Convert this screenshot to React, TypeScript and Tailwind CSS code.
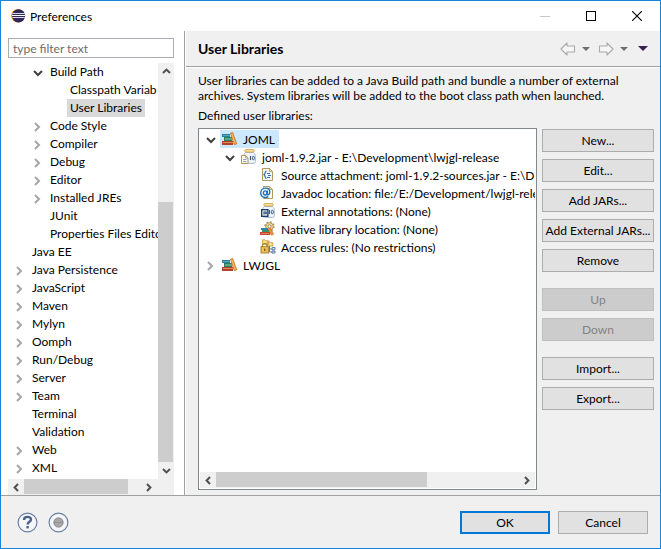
import React from "react";

type Dir = "left" | "right" | "up" | "down";

const arrowPaths: Record<Dir, string> = {
  right: "M3 1 L6.4 4.5 L3 8",
  left: "M6 1 L2.6 4.5 L6 8",
  down: "M1 3 L4.5 6.4 L8 3",
  up: "M1 6 L4.5 2.6 L8 6",
};

function Chevron({ dir }: { dir: Dir }) {
  return (
    <svg width="9" height="9" viewBox="0 0 9 9" fill="none" stroke="#505050" strokeWidth="2" aria-hidden="true">
      <path d={arrowPaths[dir]} />
    </svg>
  );
}

function Expander({ state, name }: { state?: "open" | "closed"; name: string }) {
  if (!state) return <span className="w-[19px] shrink-0" />;
  return (
    <button type="button" aria-label={`Toggle ${name}`} className="flex h-[18px] w-[19px] shrink-0 items-center justify-center pt-0.5">
      {state === "open" ? (
        <svg width="10" height="7" viewBox="0 0 10 7" fill="none" stroke="#404040" strokeWidth="2" aria-hidden="true">
          <path d="M1 1 L5 5 L9 1" />
        </svg>
      ) : (
        <svg width="7" height="10" viewBox="0 0 7 10" fill="none" stroke="#a6a6a6" strokeWidth="2" aria-hidden="true">
          <path d="M1 1 L5 5 L1 9" />
        </svg>
      )}
    </button>
  );
}

/* ---------- icons ---------- */

function EclipseIcon() {
  return (
    <svg width="16" height="16" viewBox="0 0 16 16" aria-hidden="true">
      <circle cx="7.8" cy="7.8" r="6.7" fill="#f7941e" />
      <circle cx="8.6" cy="7.8" r="6.6" fill="#2f2659" />
      <rect x="2.4" y="5" width="12.4" height="1" fill="#dcd9ea" />
      <rect x="2" y="7" width="13.2" height="1" fill="#fff" />
      <rect x="2.4" y="9" width="12.4" height="1" fill="#dcd9ea" />
    </svg>
  );
}

function BooksIcon() {
  return (
    <svg width="16" height="16" viewBox="0 0 16 16" aria-hidden="true">
      <rect x="0" y="3" width="8" height="3" fill="#2b7fa3" />
      <rect x="1" y="4" width="7" height="1" fill="#4fa9bd" />
      <rect x="2" y="6" width="8" height="4" fill="#2f7d5b" />
      <rect x="3" y="7" width="7" height="2" fill="#58aa84" />
      <rect x="0" y="10" width="11" height="4" fill="#b5432a" />
      <rect x="1" y="11" width="10" height="1" fill="#d98a5c" />
      <path d="M8.4 2.2 L10.6 1.4 L14.8 12.8 L12.4 13.8 Z" fill="#ee9a32" stroke="#c06f1b" strokeWidth="0.7" />
      <path d="M9.8 3 L13.2 12.4" stroke="#fbc878" strokeWidth="0.8" />
    </svg>
  );
}

function JarBody() {
  return (
    <>
      <path d="M4.5 3.5 C3 4.8 2.6 5.8 2.6 7.6 V12.6 C2.6 13.8 3.4 14.4 4.8 14.4 H12.2 C13.6 14.4 14.4 13.8 14.4 12.6 V7.6 C14.4 5.8 14 4.8 12.5 3.5 Z" fill="#edf3fa" stroke="#a7bbd1" />
      <rect x="3.8" y="0.6" width="9.4" height="2.4" rx="1.1" fill="#fbe9ae" stroke="#d0a440" strokeWidth="0.9" />
      <path d="M9.5 7 V11" stroke="#33557f" strokeWidth="1.1" />
      <rect x="11.4" y="7.4" width="1.9" height="3.3" rx="0.8" fill="none" stroke="#33557f" strokeWidth="0.9" />
    </>
  );
}

function JarIcon() {
  return (
    <svg width="16" height="16" viewBox="0 0 16 16" aria-hidden="true">
      <JarBody />
      <path d="M0.5 6.5 H4.5 L7 9 V14.5 H0.5 Z" fill="#fffdf2" stroke="#b8944c" />
      <path d="M4.5 6.5 V9 H7" fill="none" stroke="#b8944c" strokeWidth="0.8" />
      <path d="M2 10.5 H5.5 M2 12.5 H5.5" stroke="#7d9cc4" strokeWidth="0.9" />
    </svg>
  );
}

function SourceIcon() {
  return (
    <svg width="16" height="16" viewBox="0 0 16 16" aria-hidden="true">
      <path d="M2.5 1.5 H9.5 L12.5 4.5 V13.5 H2.5 Z" fill="#eef4fb" stroke="#b09a5e" />
      <path d="M9.5 1.5 V4.5 H12.5 Z" fill="#f2dda0" stroke="#b09a5e" strokeWidth="0.8" />
      <path d="M6.5 4.2 C4.6 4.2 5.6 7 4 7.7 C5.6 8.4 4.6 11.4 6.5 11.4" fill="none" stroke="#3a6ea5" strokeWidth="1.2" />
      <path d="M7 6.5 H10 M8 8.5 H11 M7 10.5 H10" stroke="#3a6ea5" />
    </svg>
  );
}

function JavadocIcon() {
  return (
    <svg width="16" height="16" viewBox="0 0 16 16" aria-hidden="true">
      <path d="M3.5 1.5 H9.5 L12.5 4.5 V13.5 H3.5 Z" fill="#fdfaf0" stroke="#b09a5e" />
      <path d="M9.5 1.5 V4.5 H12.5 Z" fill="#f2dda0" stroke="#b09a5e" strokeWidth="0.8" />
      <circle cx="5.2" cy="7.8" r="5.2" fill="#eef5fb" />
      <path d="M8.4 11.6 C5 13.6 0.7 12 0.7 8.1 C0.7 5.2 2.8 3.2 5.5 3.2 C8.1 3.2 9.8 4.8 9.8 7 C9.8 9 8.4 10 7.5 9.8 C6.7 9.6 7 8.7 7.6 5.6" fill="none" stroke="#1f6eb0" strokeWidth="1.3" />
      <ellipse cx="5.2" cy="7.9" rx="1.8" ry="2.1" fill="none" stroke="#1f6eb0" strokeWidth="1.3" />
    </svg>
  );
}

function AnnotationsIcon() {
  return (
    <svg width="16" height="16" viewBox="0 0 16 16" aria-hidden="true">
      <JarBody />
      <rect x="1.7" y="6.7" width="6.2" height="6.6" fill="#fff" stroke="#1f3f6c" strokeWidth="1.4" />
      <path d="M4 11.6 V9 H6.2 V10.8 H4.8" fill="none" stroke="#1f3f6c" strokeWidth="1.1" />
    </svg>
  );
}

function NativeIcon() {
  return (
    <svg width="16" height="16" viewBox="0 0 16 16" aria-hidden="true">
      <circle cx="9.5" cy="5.4" r="4.4" fill="none" stroke="#ab8c4c" strokeWidth="1.6" strokeDasharray="1.7 1.75" />
      <circle cx="9.5" cy="5.4" r="3.7" fill="#f3dfab" stroke="#b1934f" strokeWidth="0.9" />
      <circle cx="9.5" cy="5.4" r="1.6" fill="#fff" stroke="#94773d" strokeWidth="0.9" />
      <rect x="1" y="7" width="7" height="2" fill="#2d86a8" />
      <rect x="2" y="9" width="7" height="2" fill="#3d8f6b" />
      <rect x="0" y="11" width="10" height="3" fill="#c4472c" />
      <rect x="1" y="12" width="8" height="1" fill="#dd8460" />
      <path d="M8.2 7.8 L10.4 7 L13.6 13.2 L11.4 14.2 Z" fill="#f0912a" stroke="#c06f1b" strokeWidth="0.6" />
    </svg>
  );
}

function AccessIcon() {
  return (
    <svg width="16" height="16" viewBox="0 0 16 16" aria-hidden="true">
      <path d="M2.5 0.8 H5 L6 1.8 H8.5 V5.2 H2.5 Z M7.5 2.8 H10 L11 3.8 H12.8 V7 H7.5 Z" fill="#f8df8e" stroke="#c99f45" strokeWidth="0.9" />
      <path d="M9.5 7 V13 H12 M9.5 10 H12" fill="none" stroke="#5c7fae" />
      <path d="M12 8.6 H15 V10.8 H12 Z M12 12 H15 V14 H12 Z" fill="#dce8f6" stroke="#4c70a3" strokeWidth="0.9" />
      <path d="M2.4 8 V6.7 C2.4 4 7 4 7 6.7 V8" fill="none" stroke="#a67c2c" strokeWidth="1.3" />
      <rect x="1" y="7.7" width="7.4" height="6.3" fill="#edc25c" stroke="#a1782a" strokeWidth="0.9" />
      <rect x="4.2" y="9.6" width="1.2" height="2.4" fill="#6e4c10" />
    </svg>
  );
}

function HistoryArrow({ back }: { back?: boolean }) {
  return (
    <svg width="16" height="14" viewBox="0 0 16 14" aria-hidden="true">
      <path
        d={back ? "M1 7 L7 1 V4 H14.5 V10 H7 V13 Z" : "M15 7 L9 1 V4 H1.5 V10 H9 V13 Z"}
        fill="#f7f7f7"
        stroke="#a9a9a9"
        strokeWidth="1.1"
        strokeLinejoin="round"
      />
    </svg>
  );
}

function Caret({ color, big }: { color: string; big?: boolean }) {
  return big ? (
    <svg width="10" height="5" viewBox="0 0 10 5" aria-hidden="true">
      <path d="M0 0 H10 L5 5 Z" fill={color} />
    </svg>
  ) : (
    <svg width="8" height="4" viewBox="0 0 8 4" aria-hidden="true">
      <path d="M0 0 H8 L4 4 Z" fill={color} />
    </svg>
  );
}

/* ---------- scroll bars ---------- */

function HScroll({ thumb }: { thumb: string }) {
  return (
    <div className="flex h-4 min-w-0 flex-1 bg-[#f0f0f0]">
      <button type="button" aria-label="Scroll left" className="flex w-4 shrink-0 items-center justify-center">
        <Chevron dir="left" />
      </button>
      <div className="min-w-0 flex-1">
        <div className={`h-[15px] bg-[#cdcdcd] ${thumb}`} />
      </div>
      <button type="button" aria-label="Scroll right" className="flex w-[17px] shrink-0 items-center justify-center">
        <Chevron dir="right" />
      </button>
    </div>
  );
}

function VScroll() {
  return (
    <div className="flex w-4 shrink-0 flex-col bg-[#f0f0f0]">
      <button type="button" aria-label="Scroll up" className="flex h-[17px] items-center justify-center">
        <Chevron dir="up" />
      </button>
      <div className="flex flex-1 flex-col justify-end">
        <div className="h-[68%] w-[15px] bg-[#cdcdcd]" />
      </div>
      <button type="button" aria-label="Scroll down" className="flex h-[17px] items-center justify-center">
        <Chevron dir="down" />
      </button>
    </div>
  );
}

/* ---------- preference tree ---------- */

type Pref = { name: string; level: 0 | 1 | 2; state?: "open" | "closed"; selected?: boolean };

const prefs: Pref[] = [
  { name: "Build Path", level: 1, state: "open" },
  { name: "Classpath Variab", level: 2 },
  { name: "User Libraries", level: 2, selected: true },
  { name: "Code Style", level: 1, state: "closed" },
  { name: "Compiler", level: 1, state: "closed" },
  { name: "Debug", level: 1, state: "closed" },
  { name: "Editor", level: 1, state: "closed" },
  { name: "Installed JREs", level: 1, state: "closed" },
  { name: "JUnit", level: 1 },
  { name: "Properties Files Edito", level: 1 },
  { name: "Java EE", level: 0 },
  { name: "Java Persistence", level: 0, state: "closed" },
  { name: "JavaScript", level: 0, state: "closed" },
  { name: "Maven", level: 0, state: "closed" },
  { name: "Mylyn", level: 0, state: "closed" },
  { name: "Oomph", level: 0, state: "closed" },
  { name: "Run/Debug", level: 0, state: "closed" },
  { name: "Server", level: 0, state: "closed" },
  { name: "Team", level: 0, state: "closed" },
  { name: "Terminal", level: 0 },
  { name: "Validation", level: 0 },
  { name: "Web", level: 0, state: "closed" },
  { name: "XML", level: 0, state: "closed" },
];

const prefIndent = ["pl-0.5", "pl-5", "pl-10"];

/* ---------- library tree ---------- */

type Lib = { name: string; level: 0 | 1 | 2; icon: React.ReactNode; state?: "open" | "closed"; selected?: boolean };

const libs: Lib[] = [
  { name: "JOML", level: 0, icon: <BooksIcon />, state: "open", selected: true },
  { name: "joml-1.9.2.jar - E:\\Development\\lwjgl-release", level: 1, icon: <JarIcon />, state: "open" },
  { name: "Source attachment: joml-1.9.2-sources.jar - E:\\D", level: 2, icon: <SourceIcon /> },
  { name: "Javadoc location: file:/E:/Development/lwjgl-rele", level: 2, icon: <JavadocIcon /> },
  { name: "External annotations: (None)", level: 2, icon: <AnnotationsIcon /> },
  { name: "Native library location: (None)", level: 2, icon: <NativeIcon /> },
  { name: "Access rules: (No restrictions)", level: 2, icon: <AccessIcon /> },
  { name: "LWJGL", level: 0, icon: <BooksIcon />, state: "closed" },
];

const libIndent = ["pl-px", "pl-5", "pl-[39px]"];

function PushButton({ children, disabled }: { children: React.ReactNode; disabled?: boolean }) {
  return (
    <button
      type="button"
      disabled={disabled}
      className="h-[23px] w-full border border-[#adadad] bg-[#e1e1e1] whitespace-nowrap disabled:border-[#bfbfbf] disabled:bg-[#cccccc] disabled:text-[#838383]"
    >
      {children}
    </button>
  );
}

export default function App() {
  return (
    <div className="flex min-h-screen flex-col border border-[#1883d7] bg-[#f0f0f0] font-['Lato','Open_Sans',sans-serif] text-[12px] leading-[15px] text-black">
      <header className="flex h-[30px] shrink-0 items-center bg-white pl-[9px]">
        <EclipseIcon />
        <span className="ml-1 flex-1">Preferences</span>
        <button type="button" aria-label="Minimize" disabled className="flex h-full w-[46px] items-center justify-center">
          <svg width="10" height="10" viewBox="0 0 10 10" aria-hidden="true">
            <path d="M0 5.5 H10" stroke="#c8c8c8" />
          </svg>
        </button>
        <button type="button" aria-label="Maximize" className="flex h-full w-[46px] items-center justify-center">
          <svg width="10" height="10" viewBox="0 0 10 10" fill="none" aria-hidden="true">
            <rect x="0.5" y="0.5" width="9" height="9" stroke="#000" />
          </svg>
        </button>
        <button type="button" aria-label="Close" className="flex h-full w-[46px] items-center justify-center">
          <svg width="10" height="10" viewBox="0 0 10 10" aria-hidden="true">
            <path d="M0 0 L10 10 M10 0 L0 10" stroke="#000" strokeWidth="1.1" />
          </svg>
        </button>
      </header>

      <div className="flex flex-1">
        <nav aria-label="Preference pages" className="flex w-[184px] shrink-0 flex-col border-r border-[#a0a0a0] bg-white pt-[7px] pr-2.5 pl-[7px]">
          <input
            type="text"
            aria-label="Filter preferences"
            placeholder="type filter text"
            className="h-5 w-full shrink-0 border border-[#abadb3] bg-white px-1 placeholder:text-[#6d6d6d]"
          />
          <div className="mt-[5px] flex flex-1">
            <ul role="tree" className="min-w-0 flex-1 overflow-hidden">
              {prefs.map((p) => (
                <li
                  key={p.name}
                  role="treeitem"
                  aria-selected={!!p.selected}
                  className={`flex h-[18px] items-center whitespace-nowrap ${prefIndent[p.level]}`}
                >
                  <Expander state={p.state} name={p.name} />
                  <span className={`h-[18px] px-[3px] leading-[18px] ${p.selected ? "bg-[#d9d9d9]" : ""}`}>{p.name}</span>
                </li>
              ))}
            </ul>
            <VScroll />
          </div>
          <div className="flex shrink-0 bg-[#f0f0f0] pr-[17px]">
            <HScroll thumb="w-[90%]" />
          </div>
        </nav>

        <main className="flex min-w-0 flex-1 flex-col border-l border-white">
          <div className="flex h-9 shrink-0 items-center border-b border-[#a0a0a0] pr-2 pl-3">
            <h1 className="flex-1 text-[14px] font-bold">User Libraries</h1>
            <div className="flex items-center">
              <button type="button" aria-label="Back" disabled>
                <HistoryArrow back />
              </button>
              <button type="button" aria-label="Back history" disabled className="ml-1.5">
                <Caret color="#6e6e72" />
              </button>
              <button type="button" aria-label="Forward" disabled className="ml-2">
                <HistoryArrow />
              </button>
              <button type="button" aria-label="Forward history" disabled className="ml-1.5">
                <Caret color="#6e6e72" />
              </button>
              <button type="button" aria-label="View menu" className="mr-1 ml-2.5">
                <Caret color="#35204f" big />
              </button>
            </div>
          </div>

          <div className="flex flex-1 flex-col border-t border-white pt-[5px] pr-1.5 pb-[5px] pl-3">
            <p>
              User libraries can be added to a Java Build path and bundle a number of external
              <br />
              archives. System libraries will be added to the boot class path when launched.
            </p>
            <h2 className="mt-[5px]">Defined user libraries:</h2>
            <div className="mt-[5px] flex flex-1 gap-[5px]">
              <div className="flex min-w-0 flex-1 flex-col border border-[#828790] bg-white p-px">
                <ul role="tree" aria-label="Defined user libraries" className="flex-1 overflow-hidden">
                  {libs.map((l) => (
                    <li
                      key={l.name}
                      role="treeitem"
                      aria-selected={!!l.selected}
                      className={`flex h-[18px] items-center whitespace-nowrap ${libIndent[l.level]}`}
                    >
                      <Expander state={l.state} name={l.name} />
                      <span className={`flex h-[18px] items-center gap-[5px] pr-1 ${l.selected ? "bg-[#cce8ff]" : ""}`}>
                        <span className="ml-0.5 flex w-4 shrink-0">{l.icon}</span>
                        <span>{l.name}</span>
                      </span>
                    </li>
                  ))}
                </ul>
                <div className="flex">
                  <HScroll thumb="w-[70%]" />
                </div>
              </div>
              <div className="flex w-28 shrink-0 flex-col gap-[7px] pt-px">
                <PushButton>New...</PushButton>
                <PushButton>Edit...</PushButton>
                <PushButton>Add JARs...</PushButton>
                <PushButton>Add External JARs...</PushButton>
                <PushButton>Remove</PushButton>
                <div className="mt-[9px] flex flex-col gap-[7px]">
                  <PushButton disabled>Up</PushButton>
                  <PushButton disabled>Down</PushButton>
                </div>
                <div className="mt-[9px] flex flex-col gap-[7px]">
                  <PushButton>Import...</PushButton>
                  <PushButton>Export...</PushButton>
                </div>
              </div>
            </div>
          </div>
        </main>
      </div>

      <footer className="flex h-[53px] shrink-0 items-center border-t border-[#a0a0a0] pr-3 pl-4">
        <button type="button" aria-label="Help">
          <svg width="21" height="21" viewBox="0 0 21 21" fill="none" aria-hidden="true">
            <circle cx="10.5" cy="10.5" r="9.4" fill="#f4f6f9" stroke="#6a80a2" strokeWidth="1.2" />
            <path d="M7 8 C7 3.8 14 4 14 7.6 C14 10 10.6 9.6 10.6 12.6" stroke="#4a6288" strokeWidth="2.4" />
            <rect x="9.4" y="14" width="2.4" height="2.4" fill="#4a6288" />
          </svg>
        </button>
        <button type="button" aria-label="Record preferences" className="ml-2.5">
          <svg width="21" height="21" viewBox="0 0 21 21" fill="none" aria-hidden="true">
            <circle cx="10.5" cy="10.5" r="9.4" fill="#f4f6f9" stroke="#6a80a2" strokeWidth="1.2" />
            <circle cx="10.5" cy="10.5" r="4.6" fill="#a8a8a8" stroke="#828282" />
            <path d="M6.5 10.5 H14.5" stroke="#929292" />
          </svg>
        </button>
        <div className="ml-auto flex gap-2">
          <button type="submit" className="h-[23px] w-[90px] border-2 border-[#0078d7] bg-[#e1e1e1]">
            OK
          </button>
          <button type="button" className="h-[23px] w-[90px] border border-[#adadad] bg-[#e1e1e1]">
            Cancel
          </button>
        </div>
      </footer>
    </div>
  );
}
